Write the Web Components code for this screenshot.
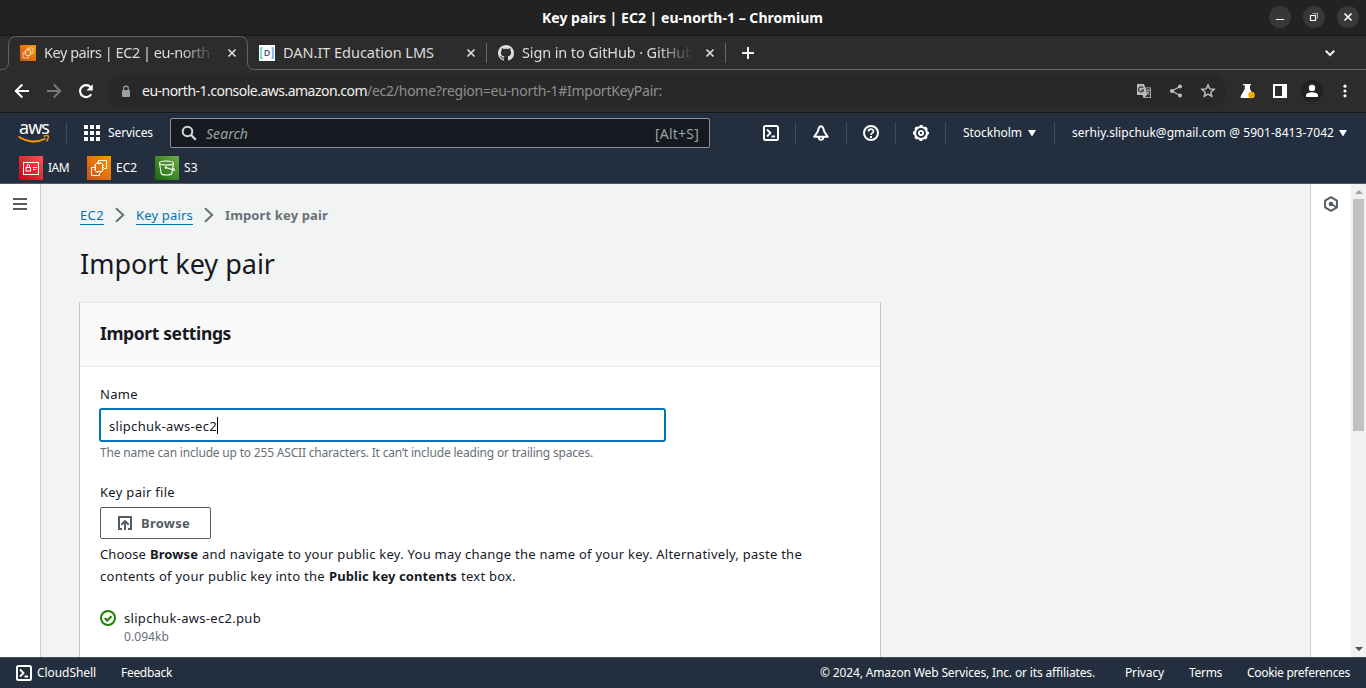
<!DOCTYPE html>
<html lang="en">
<head>
<meta charset="utf-8">
<title>Key pairs | EC2 | eu-north-1</title>
<style>
html,body{margin:0;height:100%;overflow:hidden}
body{font-family:"Noto Sans","Open Sans",sans-serif;font-size:13px;color:#16191f}
</style>
</head>
<body>
<app-window></app-window>
<script>
const define = (name, css, html, ready) => {
  const t = document.createElement('template');
  t.innerHTML = `<style>*{box-sizing:border-box}${css}</style>${html}`;
  customElements.define(name, class extends HTMLElement {
    connectedCallback() {
      if (this.shadowRoot) return;
      this.attachShadow({mode: 'open'}).append(t.content.cloneNode(true));
      if (ready) ready(this, this.shadowRoot);
    }
  });
};

/* One line of text with tracking adjusted to fill the width in "w". */
define('fit-text',
  `:host{display:block;flex:none;white-space:nowrap}span{display:inline-block}`,
  `<span><slot></slot></span>`,
  (el, root) => {
    const w = +el.getAttribute('w'), span = root.querySelector('span');
    if (!w) return;
    el.style.width = w + 'px';
    const n = el.textContent.length;
    span.style.letterSpacing = ((w - span.getBoundingClientRect().width) / n).toFixed(3) + 'px';
  });

const line = (d, w = 2, extra = '') => `<path d="${d}" fill="none" stroke="currentColor" stroke-width="${w}" ${extra}/>`;
const fill = d => `<path d="${d}" fill="currentColor"/>`;
const ec2Shape = `<g fill="none" stroke="#fff" stroke-width="1"><path d="M7.500 11.500H4.500v8h8V17M11.500 7V4.500h8v8H17"/><rect x="8.500" y="7.500" width="7" height="8" rx=".8"/><path d="M10.500 7.500V6M13.500 7.500V6M10.500 17v-1.500M13.500 17v-1.500M8.500 9.500H7M8.500 11.500H7M8.500 13.500H7M17 9.500h-1.500M17 11.500h-1.500M17 13.500h-1.500"/></g>`;
const grad = (id, a, b) => `<defs><linearGradient id="${id}" x1="0" y1="1" x2="1" y2="0"><stop offset="0" stop-color="${a}"/><stop offset="1" stop-color="${b}"/></linearGradient></defs><rect width="24" height="24" fill="url(#${id})"/>`;
const ICONS = {
  close: [10, line('M1.500 1.500l7 7M8.500 1.500l-7 7', 1.7)],
  wclose: [10, line('M1.500 1.500l7 7M8.500 1.500l-7 7', 1.6)],
  wmin: [10, fill('M1 7h8v1H1z')],
  wmax: [10, line('M1.500 3.500h5v5h-5z', 1.2) + line('M3.500 1.500h5v5', 1, 'opacity=".6"')],
  plus: [12, line('M6 0v12M0 6h12', 2)],
  down: [12, line('M1.700 3.700L6 8l4.300-4.300', 2)],
  back: [16, line('M15 8H2.500M8.300 1.500L1.800 8l6.500 6.500', 2)],
  fwd: [16, line('M1 8h12.500M7.700 1.500L14.200 8l-6.500 6.500', 2)],
  reload: [16, line('M13.200 11.300A6 6 0 1 1 12.600 4.200', 2.1) + fill('M14.800 1.200v6.300H8.500z')],
  lock: [12, `<rect x="2" y="5" width="8" height="7" rx="1" fill="currentColor"/>` + line('M3.700 5.500V3.400a2.300 2.300 0 0 1 4.600 0v2.100', 1.2)],
  github: [16, fill('M8 0C3.580 0 0 3.580 0 8c0 3.540 2.290 6.530 5.470 7.590.4.070.55-.17.55-.38 0-.19-.01-.82-.01-1.490-2.010.37-2.530-.49-2.690-.94-.09-.23-.48-.94-.82-1.130-.28-.15-.68-.52-.01-.53.63-.01 1.080.58 1.230.82.72 1.210 1.870.87 2.330.66.07-.52.28-.87.51-1.070-1.780-.2-3.640-.89-3.640-3.950 0-.87.31-1.590.82-2.150-.08-.2-.36-1.020.08-2.120 0 0 .67-.21 2.200.82.64-.18 1.320-.27 2-.27s1.360.09 2 .27c1.530-1.040 2.200-.82 2.200-.82.44 1.100.16 1.920.08 2.120.51.56.82 1.270.82 2.150 0 3.070-1.870 3.750-3.650 3.950.29.25.54.73.54 1.480 0 1.070-.01 1.930-.01 2.200 0 .21.15.46.55.38A8.010 8.010 0 0 0 16 8c0-4.420-3.580-8-8-8z')],
  dan: [16, `<rect width="16" height="16" fill="#fff"/><path d="M3.500 3H2v10h1.500" fill="none" stroke="#3fd0c4" stroke-width="1.300"/><path d="M12.500 3H14v10h-1.500" fill="none" stroke="#5f9fe8" stroke-width="1.300"/><text x="8" y="11.300" text-anchor="middle" font-family="Noto Sans,sans-serif" font-size="9" font-weight="600" fill="#4a5a78">D</text>`],
  translate: [14, `<path d="M0 0h7l1.300 3.500H14V14H6.500L5.500 11H0z" fill="#b9b9b9"/><path d="M9 4.300h4.200v8.900H7.800l2.300-2.400z" fill="#333"/><path d="M6.200 4A2.500 2.500 0 1 0 6.500 6H4.300" fill="none" stroke="#333" stroke-width="1.200"/><path d="M9.300 6.300h3.500M11 5.300v1M12.200 6.300c-.3 2-1.500 3.300-2.700 4.200M10 8l2.500 3" fill="none" stroke="#b9b9b9" stroke-width=".9"/>`],
  share: [14, line('M11 2.500L3 7l8 4.500', 1.300) + `<g fill="currentColor"><circle cx="11" cy="2.500" r="2"/><circle cx="3" cy="7" r="2.100"/><circle cx="11" cy="11.500" r="2"/></g>`],
  star: [16, line('M8 1.900l1.750 4 4.350.4-3.300 2.850 1 4.250L8 11.150 4.200 13.400l1-4.250L1.900 6.300l4.350-.4z', 1.400)],
  flask: [16, `<path d="M4 1h8v1.300h-1V6L15 13.500q.3 1.500-1 1.500H2.500q-1.500-.3-.8-1.800L5.800 6V2.300H4z" fill="#fff"/><circle cx="12.500" cy="12" r="3.200" fill="#f9ab00"/>`],
  panel: [14, `<path d="M0 0h14v14H0z" fill="#fff"/><path d="M2 2h7v10H2z" fill="#2c2c2c"/>`],
  person: [14, `<circle cx="7" cy="3.900" r="3.200" fill="#fff"/><path d="M1 13v-1.700C1 9 5 8.200 7 8.200s6 .8 6 3.100V13z" fill="#fff"/>`],
  dots: [14, `<g fill="#fff"><circle cx="7" cy="2.200" r="1.600"/><circle cx="7" cy="7" r="1.600"/><circle cx="7" cy="11.800" r="1.600"/></g>`],
  grid: [16, `<path d="M0 0h4v4H0zM6 0h4v4H6zM12 0h4v4h-4zM0 6h4v4H0zM6 6h4v4H6zM12 6h4v4h-4zM0 12h4v4H0zM6 12h4v4H6zM12 12h4v4h-4z" fill="#fff"/>`],
  search: [16, `<circle cx="6.500" cy="6.500" r="4.800" fill="none" stroke="currentColor" stroke-width="2"/>` + line('M10 10l4.800 4.800', 2.200)],
  shell: [16, `<rect x="1" y="1" width="14" height="14" rx="1.500" fill="none" stroke="currentColor" stroke-width="2"/>` + line('M4 4.500L7.500 8 4 11.500M8.500 11.500H12', 1.800)],
  bell: [16, line('M8 1.300C6.400 1.300 5.600 3.100 5.100 5.600 4.500 7.500 2.800 9.300 1.200 11.700h13.600c-1.600-2.400-3.300-4.200-3.900-6.100C10.400 3.100 9.600 1.300 8 1.300z', 1.900, 'stroke-linejoin="round"') + line('M5.700 12a2.300 2.900 0 0 0 4.600 0', 1.900)],
  help: [16, `<circle cx="8" cy="8" r="7" fill="none" stroke="currentColor" stroke-width="2"/>` + line('M5.500 6.500C5.500 3.400 10.500 3.500 10.500 6.200 10.500 8 8 7.800 8 10', 1.700) + fill('M7 11h2v2H7z')],
  gear: [16, `<circle cx="8" cy="8" r="6" fill="none" stroke="currentColor" stroke-width="2.200"/><circle cx="8" cy="8" r="7.200" fill="none" stroke="currentColor" stroke-width="1.600" stroke-dasharray="3 2.655" stroke-dashoffset="1.500"/><circle cx="8" cy="8" r="2.100" fill="none" stroke="currentColor" stroke-width="1.900"/>`],
  caret: [8, fill('M0 1h8L4 7.500z')],
  iam: [24, grad('a', '#bd0816', '#ff5252') + `<g fill="none" stroke="#fff"><rect x="4.500" y="6.500" width="15" height="12"/><rect x="7" y="11.500" width="4.500" height="3.500"/><path d="M8 11.500V9.800a1.250 1.250 0 0 1 2.500 0v1.700M14 11.500h4M14 13.500h2.500"/></g>`],
  ec2: [24, grad('b', '#c8511b', '#ff9900') + ec2Shape],
  s3: [24, grad('c', '#1b660f', '#6cae3e') + `<g fill="none" stroke="#fff" stroke-width="1.100"><ellipse cx="11.500" cy="7" rx="7" ry="2"/><path d="M4.500 7l1.700 10.500c.6 2 10 2 10.600 0L18.500 7M11 11.500l8.300 2.800c.3-1-1-1.700-2-2"/><circle cx="11" cy="11.500" r=".7"/></g>`],
  chevron: [16, line('M4 1.200L11.200 8 4 14.800', 2)],
  menu: [16, line('M1 3h14M1 8h14M1 13h14', 2)],
  hex: [16, line('M8 1.200l5.900 3.400v6.800L8 14.800l-5.900-3.400V4.600z', 2, 'stroke-linejoin="round"') + `<circle cx="8" cy="8" r="2.300" fill="currentColor"/>` + line('M8 8l5 3', 1.600)],
  upload: [16, line('M5 14H2V2h12v12h-3', 2) + line('M8 15V6.500M4.300 9.800L8 6.100l3.700 3.700', 2)],
  ok: [16, `<circle cx="8" cy="8" r="7" fill="none" stroke="currentColor" stroke-width="2"/>` + line('M4.700 8l2.500 2.500 4.300-4.300', 2)],
  up: [8, fill('M0 6l4-4 4 4z')],
  dn: [8, fill('M0 2h8L4 6z')]
};
define('ui-icon', `:host{display:block;flex:none}svg{display:block;width:100%;height:100%;overflow:visible}`, ``,
  (el, root) => {
    const [box, body] = ICONS[el.getAttribute('name')];
    const s = el.getAttribute('size') || box;
    el.style.width = el.style.height = s + 'px';
    root.innerHTML += `<svg viewBox="0 0 ${box} ${box}">${body}</svg>`;
  });

define('title-bar', `
:host{display:flex;height:36px;background:#222;border-bottom:1px solid #191919;color:#fff;align-items:center;font-size:14px;font-weight:700}
fit-text{margin-left:542px}
.b{width:22px;height:22px;border-radius:50%;background:#383838;display:grid;place-items:center;margin-right:12px;margin-bottom:1px}
.f{margin-left:auto}.l{margin-right:7px}`,
`<fit-text w="281">Key pairs | EC2 | eu-north-1 – Chromium</fit-text>
<div class="b f"><ui-icon name="wmin"></ui-icon></div><div class="b"><ui-icon name="wmax"></ui-icon></div><div class="b l"><ui-icon name="wclose"></ui-icon></div>`);

define('browser-tab', `
:host{display:flex;align-items:center;width:239px;height:34px;padding:0 10px 0 12px;flex:none;font-size:14.500px;color:#dcdcdc}
.t{margin-left:8px;width:171px;overflow:hidden;margin-right:auto;padding-bottom:2px}
:host([fade]) .t{-webkit-mask:linear-gradient(90deg,#000 80%,transparent)}`,
`<slot name="icon"></slot><div class="t"><slot></slot></div><ui-icon name="close"></ui-icon>`);

define('tab-strip', `
:host{display:flex;height:34px;background:#2c2c2c;align-items:center;padding-left:8px;position:relative;color:#f0f0f0}
.o{position:absolute;left:0;top:0}
i{width:1px;height:20px;background:#686868;flex:none}
.p{margin-left:16px}.d{margin:0 30px 0 auto}`,
`<svg class="o" width="1366" height="34"><path d="M0 33.500h1q7.500 0 7.500-7.500V8.500q0-8 8-8h223q8 0 8 8V26q0 7.500 7.500 7.500h1111" fill="none" stroke="#646464"/></svg>
<browser-tab fade><ui-icon slot="icon" name="ec2" size="16"></ui-icon><fit-text w="170">Key pairs | EC2 | eu-north-</fit-text></browser-tab>
<browser-tab><ui-icon slot="icon" name="dan"></ui-icon><fit-text w="151">DAN.IT Education LMS</fit-text></browser-tab>
<i></i>
<browser-tab fade style="width:238px;padding-left:11px"><ui-icon slot="icon" name="github"></ui-icon><fit-text w="172">Sign in to GitHub · GitHub</fit-text></browser-tab>
<i></i><ui-icon class="p" name="plus"></ui-icon><ui-icon class="d" name="down"></ui-icon>`);

define('address-bar', `
:host{display:flex;height:43px;background:#2c2c2c;border-bottom:1px solid #191919;align-items:center;padding-left:14px;color:#fff;font-size:14px}
.omni{display:flex;align-items:center;width:1118px;height:34px;border-radius:17px;background:#282828;margin-left:14px;padding:0 10px 0 12px;flex:none;color:#c0c0c0}
fit-text{padding-bottom:2px}
.g{margin-left:auto}.av{width:22px;height:22px;border-radius:50%;background:#202124;display:grid;place-items:center;margin:0 15px 0 14px}`,
`<ui-icon name="back"></ui-icon><ui-icon name="fwd" style="margin-left:16px;color:#777"></ui-icon><ui-icon name="reload" style="margin-left:16px"></ui-icon>
<div class="omni"><ui-icon name="lock" style="color:#9aa0a6"></ui-icon>
<fit-text w="225" style="margin-left:10px;color:#f2f2f2">eu-north-1.console.aws.amazon.com</fit-text><fit-text w="295" style="color:#8f8f8f">/ec2/home?region=eu-north-1#ImportKeyPair:</fit-text>
<ui-icon class="g" name="translate"></ui-icon><ui-icon name="share" style="margin-left:18px"></ui-icon><ui-icon name="star" style="margin-left:17px"></ui-icon></div>
<ui-icon name="flask" style="margin-left:13px"></ui-icon><ui-icon name="panel" style="margin-left:18px"></ui-icon><div class="av"><ui-icon name="person"></ui-icon></div><ui-icon name="dots"></ui-icon>`);

define('aws-logo', `:host{display:block;width:32px;height:24px;position:relative;flex:none;color:#fff;font-size:18px;line-height:20px}
fit-text{margin:-4px 0 0 1px}svg{position:absolute;left:0;top:14px}`,
`<fit-text w="30">aws</fit-text><svg width="32" height="10"><path d="M.5 1.500c8.500 6 19 6.500 27 2" fill="none" stroke="#f90" stroke-width="1.900"/><path d="M25.500 1.300c2-.8 5.200-.8 5 .2s-.5 3.500-2 5" fill="none" stroke="#f90" stroke-width="1.300"/></svg>`);

define('console-header', `
:host{display:block;height:71px;background:#232f3e;border-bottom:1px solid #545b64;color:#fff;font-size:12px}
.r{display:flex;height:40px;align-items:center}
.r>fit-text{padding-bottom:1px}
i{width:1px;height:22px;background:#414d5c;flex:none}
.s{display:flex;align-items:center;width:540px;height:30px;margin-left:17px;background:#16191f;border:1px solid #879596;border-radius:2px;padding:0 10px;font-size:14px;color:#95a5a6;flex:none}
.fav{height:30px;padding-left:19px}.fav fit-text{margin:0 18px 0 5px}`,
`<div class="r"><aws-logo style="margin-left:18px"></aws-logo><i style="margin-left:16px"></i><ui-icon name="grid" style="margin-left:17px"></ui-icon><fit-text w="45" style="margin-left:8px">Services</fit-text>
<div class="s"><ui-icon name="search" style="color:#d5dbdb"></ui-icon><fit-text w="42" style="margin-left:9px;font-style:italic">Search</fit-text><fit-text w="44" style="margin-left:auto">[Alt+S]</fit-text></div>
<ui-icon name="shell" style="margin-left:53px"></ui-icon><i style="margin-left:16px"></i><ui-icon name="bell" style="margin-left:17px"></ui-icon><i style="margin-left:17px"></i><ui-icon name="help" style="margin-left:16px"></ui-icon><i style="margin-left:16px"></i><ui-icon name="gear" style="margin-left:17px"></ui-icon><i style="margin-left:16px"></i>
<fit-text w="59" style="margin-left:17px">Stockholm</fit-text><ui-icon name="caret" style="margin-left:6px"></ui-icon><i style="margin-left:18px"></i><fit-text w="262" style="margin-left:17px">serhiy.slipchuk@gmail.com @ 5901-8413-7042</fit-text><ui-icon name="caret" style="margin-left:5px"></ui-icon></div>
<div class="r fav"><ui-icon name="iam"></ui-icon><fit-text w="21">IAM</fit-text><ui-icon name="ec2"></ui-icon><fit-text w="21">EC2</fit-text><ui-icon name="s3"></ui-icon><fit-text w="14">S3</fit-text></div>`);

define('bread-crumbs', `
:host{display:flex;line-height:22px;height:22px;align-items:flex-start}
a{color:#0073bb;height:21px;border-bottom:1px solid #0073bb;line-height:22px}
ui-icon{color:#687078;margin:3px 8px 0}`,
`<a><fit-text w="24">EC2</fit-text></a><ui-icon name="chevron"></ui-icon><a><fit-text w="57">Key pairs</fit-text></a><ui-icon name="chevron"></ui-icon><fit-text w="103" style="color:#687078;font-weight:700">Import key pair</fit-text>`);

define('settings-panel', `
:host{display:block;width:802px;background:#fff;border:1px solid #c3c9c9;border-top-color:#e4e8e8;border-bottom:0;margin-left:-1px;height:400px}
header{height:64px;background:#fafafa;border-bottom:1px solid #eaeded;padding:19px 20px 0}
h2{margin:0;font-size:17.500px;line-height:22px;font-weight:700}
.b{padding:16px 20px}`,
`<header><h2><slot name="title"></slot></h2></header><div class="b"><slot></slot></div>`);

define('name-field', `:host{display:block;line-height:22px}
.in{display:flex;align-items:center;width:567px;height:34px;margin:3px 0 0 -1px;border:2px solid #0073bb;border-radius:3px;padding:2px 0 0 8px}
.c{width:1px;height:17px;background:#000;margin-top:-2px}.h{font-size:12px;line-height:16px;color:#687078;margin-top:3px}`,
`<fit-text w="38">Name</fit-text><div class="in"><fit-text w="108">slipchuk-aws-ec2</fit-text><div class="c"></div></div><fit-text class="h" w="493">The name can include up to 255 ASCII characters. It can’t include leading or trailing spaces.</fit-text>`);

define('file-field', `:host{display:block;line-height:22px;margin-top:20px}
.btn{display:flex;align-items:center;width:111px;height:32px;border:1px solid #545b64;border-radius:2px;margin:4px 0;padding-left:16px;color:#545b64;font-weight:700}
.l{display:flex}b{font-weight:700}.f{display:flex;margin-top:20px;align-items:flex-start}.s{font-size:12px;line-height:16px;color:#687078}`,
`<fit-text w="75">Key pair file</fit-text><div class="btn"><ui-icon name="upload"></ui-icon><fit-text w="49" style="margin-left:8px">Browse</fit-text></div>
<div class="l"><fit-text w="46">Choose</fit-text><b style="margin-left:4px"><fit-text w="48">Browse</fit-text></b><fit-text w="600" style="margin-left:4px">and navigate to your public key. You may change the name of your key. Alternatively, paste the</fit-text></div>
<div class="l"><fit-text w="225">contents of your public key into the</fit-text><b style="margin-left:4px"><fit-text w="128">Public key contents</fit-text></b><fit-text w="55" style="margin-left:4px">text box.</fit-text></div>
<div class="f"><ui-icon name="ok" style="color:#1d8102;margin-top:3px"></ui-icon><div style="margin-left:8px"><fit-text w="137">slipchuk-aws-ec2.pub</fit-text><fit-text class="s" w="45">0.094kb</fit-text></div></div>`);

define('console-main', `
:host{display:flex;height:473px;background:#f2f3f3;overflow:hidden}
.n{width:41px;background:#fff;border-right:1px solid #c8cccc;padding:12px 0 0 12px;color:#545b64;flex:none}
main{flex:1;padding:20px 0 0 39px;overflow:hidden}
h1{margin:20px 0 20px;font-size:27px;line-height:36px;font-weight:400;height:36px}
.r{width:41px;background:#fff;border-left:1px solid #c8cccc;padding:12px 0 0 12px;color:#545b64;flex:none}
.sb{width:15px;background:#f1f1f1;display:flex;flex-direction:column;align-items:center;padding:4px 0 4px;flex:none}
.th{width:11px;height:232px;background:#c1c1c1;margin:3px 0 auto}`,
`<div class="n"><ui-icon name="menu"></ui-icon></div>
<main><bread-crumbs></bread-crumbs><h1><fit-text w="195">Import key pair</fit-text></h1>
<settings-panel><fit-text slot="title" w="131">Import settings</fit-text><name-field></name-field><file-field></file-field></settings-panel></main>
<div class="r"><ui-icon name="hex"></ui-icon></div><div class="sb"><ui-icon name="up" style="color:#a3a3a3"></ui-icon><div class="th"></div><ui-icon name="dn" style="color:#505050"></ui-icon></div>`);

define('console-footer', `:host{display:flex;height:31px;background:#232f3e;border-top:1px solid #414d5c;align-items:center;color:#fff;font-size:12px;padding:0 16px}
fit-text{padding-bottom:1px}`,
`<ui-icon name="shell"></ui-icon><fit-text w="59" style="margin-left:5px">CloudShell</fit-text><fit-text w="51" style="margin-left:25px">Feedback</fit-text>
<fit-text w="275" style="margin-left:auto">© 2024, Amazon Web Services, Inc. or its affiliates.</fit-text><fit-text w="39" style="margin-left:30px">Privacy</fit-text><fit-text w="33" style="margin-left:25px">Terms</fit-text><fit-text w="103" style="margin-left:25px">Cookie preferences</fit-text>`);

define('app-window', `:host{display:block;width:1366px;height:688px;overflow:hidden}`,
`<title-bar></title-bar><tab-strip></tab-strip><address-bar></address-bar><console-header></console-header><console-main></console-main><console-footer></console-footer>`);
</script>
</body>
</html>
